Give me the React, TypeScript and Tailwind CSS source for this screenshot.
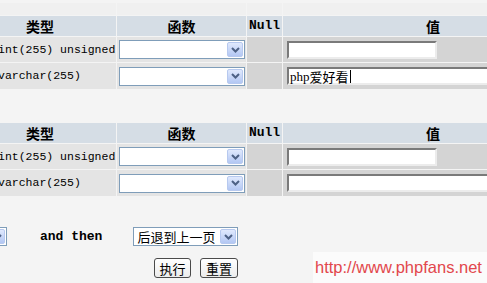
import type { ReactNode } from "react";

const cjk = "font-['SimSun','Noto_Sans_CJK_SC',sans-serif]";

const Arrow = () => (
  <span className="flex h-[15px] w-[16px] items-center justify-center rounded-[2px] border border-[#b7c9ef] bg-gradient-to-b from-[#e0e9fd] to-[#b3c7f3]">
    <svg width="9" height="6" viewBox="0 0 9 6">
      <path d="M1 1l3.5 3.5L8 1" fill="none" stroke="#4d6185" strokeWidth="2" />
    </svg>
  </span>
);

const FakeSelect = ({ className, children }: { className: string; children?: ReactNode }) => (
  <div
    className={`flex h-[19px] items-center justify-between border border-[#7f9db9] bg-white pl-[3px] pr-px ${className}`}
  >
    <span className="text-[13px] leading-none text-black">{children}</span>
    <Arrow />
  </div>
);

const Inset = ({ className, children }: { className: string; children?: ReactNode }) => (
  <div
    className={`flex h-[18px] items-center border-2 border-t-[#7a7a7a] border-l-[#7a7a7a] border-r-[#ececec] border-b-[#ececec] bg-white px-[1px] ${className}`}
  >
    {children}
  </div>
);

const Row = ({ type, value }: { type: string; value: ReactNode }) => (
  <>
    <div className="flex items-center bg-[#e4e4e4] pl-0 font-['Liberation_Mono',monospace] text-[11.5px] text-black">
      <span className="-ml-[2px] whitespace-pre">{type}</span>
    </div>
    <div className="flex items-center bg-[#e4e4e4] pl-[2px]">
      <FakeSelect className="w-[126px]" />
    </div>
    <div className="bg-[#d4d4d4]" />
    <div className="flex items-center bg-[#d4d4d4] pl-[4px]">{value}</div>
  </>
);

const Header = () => (
  <>
    <div className={`flex items-center justify-center bg-[#d5dde5] pr-[36px] text-[14px] font-bold text-black ${cjk}`}>
      类型
    </div>
    <div className={`flex items-center justify-center bg-[#d5dde5] text-[14px] font-bold text-black ${cjk}`}>
      函数
    </div>
    <div className="flex items-center justify-center bg-[#d5dde5] font-['Liberation_Mono',monospace] text-[13px] font-bold text-black">
      Null
    </div>
    <div className={`flex items-center justify-center bg-[#d5dde5] text-[14px] font-bold text-black ${cjk}`}>
      值
    </div>
  </>
);

const InsertTable = ({ filled }: { filled?: boolean }) => (
  <div className="grid w-[583px] grid-cols-[116px_129px_35px_300px] grid-rows-[20px_25px_26px] gap-px">
    <Header />
    <Row type="int(255) unsigned" value={<Inset className="w-[150px]" />} />
    <Row
      type="varchar(255)"
      value={
        <Inset className="w-[290px]">
          {filled && (
            <span className={`flex items-center text-[13px] leading-none text-black ${cjk}`}>
              <span className="font-['Liberation_Serif',serif]">php</span>爱好看
              <span className="ml-px inline-block h-[13px] w-px bg-black" />
            </span>
          )}
        </Inset>
      }
    />
  </div>
);

export default function App() {
  return (
    <div className="relative h-[283px] w-[487px] overflow-hidden bg-[#f4f4f4]">
      <div className="pt-[3px]">
        <div className="grid w-[583px] grid-cols-[116px_129px_35px_300px] gap-px">
          <div className="h-[12px] bg-[#f0f0f0]" />
          <div className="h-[12px] bg-[#f0f0f0]" />
          <div className="h-[12px] bg-[#f0f0f0]" />
          <div className="h-[12px] bg-[#f0f0f0]" />
        </div>
      </div>
      <div className="mt-px">
        <InsertTable filled />
      </div>
      <div className="mt-[34px]">
        <InsertTable />
      </div>

      <div className="mt-[31px] flex h-[19px] items-center">
        <div className="-ml-[111px]">
          <FakeSelect className="w-[118px]" />
        </div>
        <span className="ml-[33px] font-['Liberation_Mono',monospace] text-[13px] font-bold text-black whitespace-pre">
          and then
        </span>
        <div className={`ml-[31px] ${cjk}`}>
          <FakeSelect className="w-[105px]">后退到上一页</FakeSelect>
        </div>
      </div>

      <div className="mt-[12px] flex gap-[9px] pl-[154px]">
        <button
          className={`h-[20px] w-[37px] rounded-[3px] border border-[#4a4a4a] bg-gradient-to-b from-white to-[#ececec] text-[13px] leading-none text-black ${cjk}`}
        >
          执行
        </button>
        <button
          className={`h-[20px] w-[38px] rounded-[3px] border border-[#4a4a4a] bg-gradient-to-b from-white to-[#ececec] text-[13px] leading-none text-black ${cjk}`}
        >
          重置
        </button>
      </div>

      <div className="absolute bottom-0 left-[313px] flex h-[31px] w-[174px] items-center bg-[#fbfbfb] pl-[2px] font-['Liberation_Sans',Arial,sans-serif] text-[16.5px] text-[#e2474c]">
        http://www.phpfans.net
      </div>
    </div>
  );
}
